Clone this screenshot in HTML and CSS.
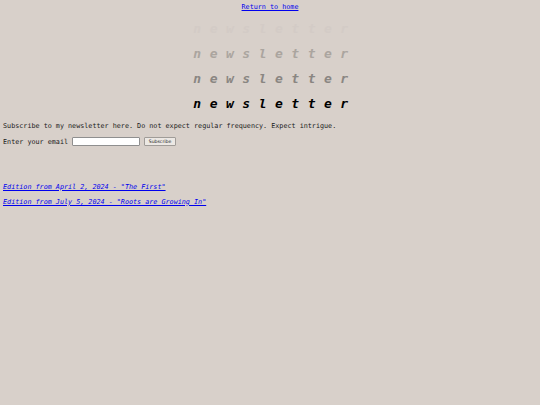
FILE: index.html
```html
<!DOCTYPE html>
<html>
<head>
<meta charset="utf-8">
<link rel="stylesheet" href="styles.css">
</head>
<body>
<div class="nav"><a href="#">Return to home</a></div>
<div class="titles">
  <div class="title t1">newsletter</div>
  <div class="title t2">newsletter</div>
  <div class="title t3">newsletter</div>
  <div class="title t4">newsletter</div>
</div>
<p class="intro">Subscribe to my newsletter here. Do not expect regular frequency. Expect intrigue.</p>
<form class="signup">
  <label class="label">Enter your email</label>
  <input class="email" type="text">
  <button class="btn" type="button">Subscribe</button>
</form>
<ul class="editions">
  <li><a href="#">Edition from April 2, 2024 - "The First"</a></li>
  <li><a href="#">Edition from July 5, 2024 - "Roots are Growing In"</a></li>
</ul>
</body>
</html>
```
FILE: styles.css
```css
html, body {
  background: #d8d0ca;
}
body {
  margin: 3px;
  font-family: "DejaVu Sans Mono", monospace;
  font-size: 6.75px;
  line-height: 8px;
  color: #1a1a1a;
}
a {
  color: #0000ee;
}
.nav {
  text-align: center;
  height: 8px;
}
.titles {
  margin-top: 4.5px;
}
.title {
  text-align: center;
  font-size: 13px;
  line-height: 25px;
  font-weight: bold;
  font-style: italic;
  letter-spacing: 8.5px;
  padding-left: 10px;
}
.t1 { color: #d3cbc6; }
.t2 { color: #aba59f; }
.t3 { color: #8a8682; }
.t4 { color: #000; }
.intro {
  margin: 6px 0 0 0;
}
.signup {
  margin: 7px 0 0 0;
  display: flex;
  align-items: center;
  height: 10px;
}
.label {
  margin-right: 4px;
}
.email {
  box-sizing: border-box;
  width: 68px;
  height: 9px;
  margin: 0 4px 0 0;
  padding: 0;
  border: 1px solid #8f8f8f;
  border-radius: 1px;
  background: #fff;
}
.btn {
  box-sizing: border-box;
  width: 32px;
  height: 9px;
  margin: 0;
  padding: 0;
  border: 1px solid #a09c98;
  border-radius: 1px;
  background: #ece8e4;
  font-family: "DejaVu Sans", sans-serif;
  font-size: 4.6px;
  line-height: 7px;
  color: #222;
}
.editions {
  list-style: none;
  margin: 36px 0 0 0;
  padding: 0;
}
.editions li {
  line-height: 8px;
  margin-bottom: 7px;
  font-style: italic;
}
```
